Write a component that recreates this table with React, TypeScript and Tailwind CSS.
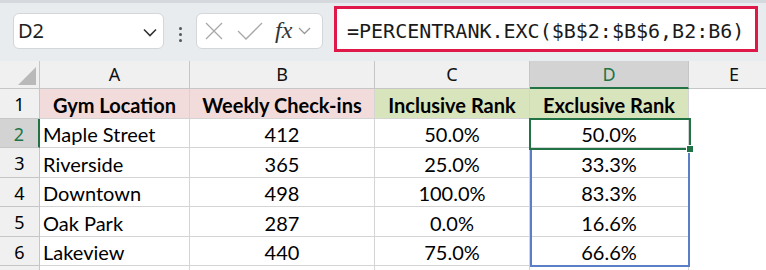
import React from "react";

const cellFont = { fontFamily: "Lato, 'Open Sans', sans-serif" };

const rows: [string, string, string, string][] = [
  ["Maple Street", "412", "50.0%", "50.0%"],
  ["Riverside", "365", "25.0%", "33.3%"],
  ["Downtown", "498", "100.0%", "83.3%"],
  ["Oak Park", "287", "0.0%", "16.6%"],
  ["Lakeview", "440", "75.0%", "66.6%"],
];

const rowH = ["h-[29px]", "h-[30px]", "h-[29px]", "h-[30px]", "h-[29px]"];

export default function App() {
  return (
    <div className="w-[766px] h-[270px] overflow-hidden bg-white relative" style={cellFont}>
      {/* toolbar */}
      <div className="h-[61px] bg-[#e9ecef] border-t-[3px] border-[#d5d9dd] flex items-start relative">
        {/* name box */}
        <div className="ml-[13px] mt-[10px] w-[151px] h-[36px] bg-white border border-[#d3d6da] rounded-[6px] flex items-center justify-between pl-[4px] pr-[6px]">
          <span className="text-[20px] text-[#222]" style={{ fontFamily: "'Noto Sans', sans-serif" }}>D2</span>
          <svg width="14" height="9" viewBox="0 0 14 9" className="mb-[-2px]">
            <path d="M1 1.5 L7 7.5 L13 1.5" fill="none" stroke="#333" strokeWidth="1.6" />
          </svg>
        </div>
        {/* dots */}
        <div className="w-[32px] mt-[24px] flex flex-col items-center gap-[3px]">
          <div className="w-[3px] h-[3px] bg-[#555] rounded-full" />
          <div className="w-[3px] h-[3px] bg-[#555] rounded-full" />
          <div className="w-[3px] h-[3px] bg-[#555] rounded-full" />
        </div>
        {/* fx box */}
        <div className="mt-[10px] w-[127px] h-[36px] bg-white border border-[#d3d6da] rounded-[6px] flex items-center pl-[7px]">
          <svg width="20" height="20" viewBox="0 0 20 20">
            <path d="M2 2 L18 18 M18 2 L2 18" stroke="#a8a8a8" strokeWidth="1.3" fill="none" />
          </svg>
          <svg width="26" height="20" viewBox="0 0 26 20" className="ml-[13px]">
            <path d="M1 10 L9 18 L25 2" stroke="#a8a8a8" strokeWidth="1.3" fill="none" />
          </svg>
          <span
            className="ml-[12px] text-[24px] italic text-[#333] leading-none mt-[-2px]"
            style={{ fontFamily: "'Liberation Serif', serif" }}
          >
            fx
          </span>
          <svg width="13" height="8" viewBox="0 0 13 8" className="ml-[6px]">
            <path d="M1 1 L6.5 6.5 L12 1" fill="none" stroke="#999" strokeWidth="1.3" />
          </svg>
        </div>
        {/* formula box */}
        <div className="ml-[11px] mt-[3px] w-[424px] h-[46px] bg-white border-[3px] border-[#e0184a] flex items-center pl-[10px] pt-[3px]">
          <span className="text-[20px] text-[#1a1a1a]" style={{ fontFamily: "'DejaVu Sans Mono', monospace" }}>
            =PERCENTRANK.EXC($B$2:$B$6,B2:B6)
          </span>
        </div>
      </div>

      {/* grid */}
      <div className="grid grid-cols-[40px_150px_185px_155px_159px_1fr] text-[20px] text-black">
        {/* header row */}
        <div className="h-[28px] bg-[#f0f0f0] border-r border-b border-[#c6c6c6] relative">
          <div
            className="absolute right-[3px] bottom-[3px] w-0 h-0 border-l-[18px] border-l-transparent border-b-[18px] border-b-[#b9b9b9]"
          />
        </div>
        {["A", "B", "C"].map((c) => (
          <div key={c} className="h-[28px] bg-[#f0f0f0] border-r border-b border-[#c6c6c6] flex items-center justify-center text-[18px] text-[#111]" style={{ fontFamily: "'Noto Sans', sans-serif" }}>
            {c}
          </div>
        ))}
        <div className="h-[28px] bg-[#d3d3d3] border-r border-[#c6c6c6] border-b-[2px] border-b-[#217346] flex items-center justify-center text-[18px] text-[#217346]" style={{ fontFamily: "'Noto Sans', sans-serif" }}>
          D
        </div>
        <div className="h-[28px] bg-[#f0f0f0] border-b border-[#c6c6c6] flex items-center justify-start pl-[40px] text-[18px] text-[#111]" style={{ fontFamily: "'Noto Sans', sans-serif" }}>
          E
        </div>

        {/* row 1 */}
        <div className="h-[30px] bg-[#f0f0f0] border-r border-b border-[#c6c6c6] flex items-center justify-center text-[18px] pt-[2px]" style={{ fontFamily: "'Noto Sans', sans-serif" }}>
          1
        </div>
        <div className="h-[30px] bg-[#f2dcdb] border-r border-b border-[#d4d4d4] flex items-center justify-center font-bold pt-[2px]">Gym Location</div>
        <div className="h-[30px] bg-[#f2dcdb] border-r border-b border-[#d4d4d4] flex items-center justify-center font-bold pt-[2px]">Weekly Check-ins</div>
        <div className="h-[30px] bg-[#d8e4bc] border-r border-b border-[#d4d4d4] flex items-center justify-center font-bold pt-[2px]">Inclusive Rank</div>
        <div className="h-[30px] bg-[#d8e4bc] border-r border-b border-[#d4d4d4] flex items-center justify-center font-bold pt-[2px]">Exclusive Rank</div>
        <div className="h-[30px]" />

        {rows.map((r, i) => {
          const sel = i === 0;
          return (
            <React.Fragment key={i}>
              <div
                className={`${rowH[i]} border-b border-[#c6c6c6] flex items-center justify-center text-[18px] pt-[2px] ${
                  sel ? "bg-[#d3d3d3] text-[#217346] border-r-[2px] border-r-[#217346]" : "bg-[#f0f0f0] border-r"
                }`}
                style={{ fontFamily: "'Noto Sans', sans-serif" }}
              >
                {i + 2}
              </div>
              <div className={`${rowH[i]} border-r border-b border-[#d4d4d4] flex items-center pl-[3px] pt-[2px]`}>{r[0]}</div>
              <div className={`${rowH[i]} border-r border-b border-[#d4d4d4] flex items-center justify-center pt-[2px]`}>{r[1]}</div>
              <div className={`${rowH[i]} border-r border-b border-[#d4d4d4] flex items-center justify-center pt-[2px]`}>{r[2]}</div>
              <div className={`${rowH[i]} border-r border-b border-[#d4d4d4] flex items-center justify-center pt-[2px]`}>{r[3]}</div>
              <div className={`${rowH[i]}`} />
            </React.Fragment>
          );
        })}
        <div className="h-[6px] bg-[#f0f0f0] border-r border-[#c6c6c6]" />
        <div className="h-[6px] border-r border-[#d4d4d4]" />
        <div className="h-[6px] border-r border-[#d4d4d4]" />
        <div className="h-[6px] border-r border-[#d4d4d4]" />
        <div className="h-[6px] border-r border-[#d4d4d4]" />
        <div className="h-[6px]" />
      </div>

      {/* blue range border D3:D6 */}
      <div className="absolute left-[530px] top-[148px] w-[160px] h-[119px] border-2 border-[#5b7fc6] pointer-events-none" />
      {/* green selection D2 */}
      <div className="absolute left-[529px] top-[118px] w-[162px] h-[32px] border-[2px] border-[#217346] pointer-events-none" />
      {/* fill handle */}
      <div className="absolute left-[686px] top-[145px] w-[8px] h-[8px] bg-[#217346] border border-white pointer-events-none" />
    </div>
  );
}
